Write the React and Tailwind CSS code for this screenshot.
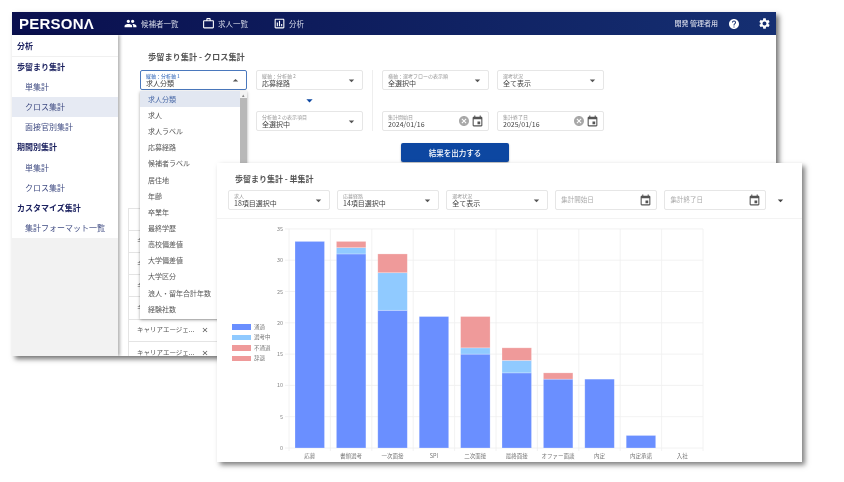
import { MdPeople, MdOutlineWorkOutline, MdOutlineAssessment, MdHelp, MdSettings, MdCancel, MdEvent, MdArrowDropDown, MdArrowDropUp, MdClose } from "react-icons/md";

const sidebar = [
  { label: "分析", head: true, line: true },
  { label: "歩留まり集計", head: true },
  { label: "単集計" },
  { label: "クロス集計", active: true },
  { label: "面接官別集計" },
  { label: "期間別集計", head: true },
  { label: "単集計" },
  { label: "クロス集計" },
  { label: "カスタマイズ集計", head: true },
  { label: "集計フォーマット一覧" },
];

const options = ["求人分類", "求人", "求人ラベル", "応募経路", "候補者ラベル", "居住地", "年齢", "卒業年", "最終学歴", "高校偏差値", "大学偏差値", "大学区分", "浪人・留年合計年数", "経験社数"];

const stages = [
  { name: "応募", pass: 33, mid: 0, fail: 0 },
  { name: "書類選考", pass: 31, mid: 1, fail: 1 },
  { name: "一次面接", pass: 22, mid: 6, fail: 3 },
  { name: "SPI", pass: 21, mid: 0, fail: 0 },
  { name: "二次面接", pass: 15, mid: 1, fail: 5 },
  { name: "最終面接", pass: 12, mid: 2, fail: 2 },
  { name: "オファー面談", pass: 11, mid: 0, fail: 1 },
  { name: "内定", pass: 11, mid: 0, fail: 0 },
  { name: "内定承諾", pass: 2, mid: 0, fail: 0 },
  { name: "入社", pass: 0, mid: 0, fail: 0 },
];

const legend = [
  { label: "通過", color: "bg-[#6a8fff]" },
  { label: "選考中", color: "bg-[#90caff]" },
  { label: "不通過", color: "bg-[#ef9a9a]" },
  { label: "辞退", color: "bg-[#ef9a9a]" },
];

function Field({ label, value, width = "w-[107px]", focused, date, clear }) {
  return (
    <div className={`${width} h-[20px] shrink-0 rounded-[2px] bg-white flex items-center pl-[5px] pr-[4px] ${focused ? "border-[1.5px] border-[#4a78bd]" : "border border-[#e6e6e6]"}`}>
      <div className="flex-1 min-w-0">
        <div className={`text-[5px] leading-[6px] whitespace-nowrap ${focused ? "text-[#2a62b8]" : "text-[#999999]"}`}>{label}</div>
        <div className="text-[7px] leading-[8px] text-[#444444] whitespace-nowrap">{value}</div>
      </div>
      {clear && <MdCancel className="text-[12px] text-[#a8a8a8] mr-[1px]" />}
      {date ? <MdEvent className="text-[13px] text-[#555555]" /> : focused ? <MdArrowDropUp className="text-[13px] text-[#555555]" /> : <MdArrowDropDown className="text-[13px] text-[#555555]" />}
    </div>
  );
}

function DateEmpty({ label }) {
  return (
    <div className="w-[102px] h-[20px] shrink-0 rounded-[2px] border border-[#e6e6e6] bg-white flex items-center justify-between pl-[5px] pr-[4px]">
      <span className="text-[6.5px] text-[#aaaaaa]">{label}</span>
      <MdEvent className="text-[13px] text-[#555555]" />
    </div>
  );
}

function Chart() {
  const x0 = 24;
  const step = 41.4;
  const unit = 6.26;
  const base = 229;
  const bar = (i, from, count, fill) =>
    count > 0 && <rect key={fill} x={x0 + step * i + 6} y={base - (from + count) * unit} width={29.5} height={count * unit} fill={fill} stroke="#ffffff" strokeOpacity="0.35" strokeWidth="0.7" />;
  return (
    <svg width="450" height="244" className="block shrink-0">
      {[0, 5, 10, 15, 20, 25, 30, 35].map(v => (
        <g key={v}>
          <line x1={x0 - 4} x2={x0 + step * 10} y1={base - v * unit} y2={base - v * unit} stroke="#efefef" strokeWidth="0.8" />
          <text x={x0 - 6} y={base - v * unit + 2} textAnchor="end" fontSize="5.5" fill="#888888">{v}</text>
        </g>
      ))}
      {stages.map((s, i) => (
        <g key={s.name}>
          <line x1={x0 + step * i} x2={x0 + step * i} y1={base - 219} y2={base + 3} stroke="#efefef" strokeWidth="0.8" />
          {bar(i, 0, s.pass, "#6a8fff")}
          {bar(i, s.pass, s.mid, "#90caff")}
          {bar(i, s.pass + s.mid, s.fail, "#ef9a9a")}
          <text x={x0 + step * i + 20.7} y={base + 10} textAnchor="middle" fontSize="5.5" fill="#777777">{s.name}</text>
        </g>
      ))}
      <line x1={x0 + step * 10} x2={x0 + step * 10} y1={base - 219} y2={base + 3} stroke="#efefef" strokeWidth="0.8" />
    </svg>
  );
}

export default function App() {
  return (
    <div className="relative w-[844px] h-[482px] overflow-hidden bg-white blur-[0.5px] font-['Noto_Sans_CJK_JP','Noto_Sans',sans-serif]">
      {/* back window */}
      <div className="absolute left-[12px] top-[12px] w-[764px] h-[344px] bg-white overflow-hidden flex flex-col shadow-[3px_3px_5px_rgba(0,0,0,0.55)]">
        <header className="h-[23px] shrink-0 flex items-center bg-gradient-to-r from-[#0a0f4e] to-[#152f72] text-white">
          <div className="ml-[7px] w-[105px] font-['Liberation_Sans'] font-bold text-[15px] tracking-[0.25px] leading-none">PERSONΛ</div>
          <nav className="flex items-center text-[7.5px] text-[#d5d9e8]">
            <MdPeople className="text-[13px] text-white" />
            <span className="ml-[4px] w-[61px]">候補者一覧</span>
            <MdOutlineWorkOutline className="text-[13px] text-white" />
            <span className="ml-[3px] w-[55px]">求人一覧</span>
            <MdOutlineAssessment className="text-[13px] text-white" />
            <span className="ml-[3px]">分析</span>
          </nav>
          <div className="ml-auto flex items-center pr-[5px]">
            <span className="text-[7px] font-medium text-[#d5d9e8]">開発 管理者用</span>
            <MdHelp className="ml-[10px] text-[12px]" />
            <MdSettings className="ml-[18px] text-[13px]" />
          </div>
        </header>
        <div className="flex-1 flex min-h-0">
          <aside className="w-[106px] shrink-0 bg-[#f2f2f2] shadow-[2px_0_3px_rgba(0,0,0,0.3)] relative">
            <div className="bg-white">
              {sidebar.map((s, i) => (
                <div key={i} className={`flex items-center text-[8px] leading-none ${s.head ? "pl-[5px] font-bold text-[#1c2260]" : "pl-[13px] text-[#3f4b82]"} ${s.active ? "bg-[#e6eaf3]" : ""} ${s.line ? "h-[22px] pt-[1px] border-b border-[#f0f0f0]" : "h-[20.1px]"}`}>
                  {s.label}
                </div>
              ))}
            </div>
          </aside>
          <main className="relative flex-1 min-w-0">
            <h2 className="ml-[30px] mt-[15px] text-[8.2px] leading-[13px] font-bold text-[#555555]">歩留まり集計 - クロス集計</h2>
            <div className="ml-[22px] mt-[7px] flex">
              <Field label="縦軸：分析軸 1" value="求人分類" focused />
              <div className="ml-[9px] w-[107px] flex flex-col items-center">
                <Field label="縦軸：分析軸 2" value="応募経路" />
                <MdArrowDropDown className="text-[15px] text-[#0d47a1] my-[3px]" />
                <Field label="分析軸 2 の表示項目" value="全選択中" />
              </div>
              <div className="ml-[9px] pl-[9px] border-l border-[#eeeeee] flex flex-col gap-[21px]">
                <div className="flex gap-[8px]">
                  <Field label="横軸：選考フローの表示順" value="全選択中" />
                  <Field label="選考状況" value="全て表示" />
                </div>
                <div className="flex gap-[8px]">
                  <Field label="集計開始日" value="2024/01/16" date clear />
                  <Field label="集計終了日" value="2025/01/16" date clear />
                </div>
              </div>
            </div>
            <button className="block ml-[283px] mt-[12px] w-[108px] h-[18.5px] rounded-[2px] bg-[#0d47a1] text-white text-[7.5px] font-medium shadow-[0_1px_2px_rgba(0,0,0,0.3)]">結果を出力する</button>
            <div className="ml-[10px] mt-[46px] w-[300px] border-t border-l border-[#e4e4e4]">
              <div className="h-[22px] border-b border-[#e4e4e4]" />
              {[0, 1, 2, 3].map(i => (
                <div key={i} className="h-[22.3px] border-b border-[#e4e4e4] flex items-center pl-[8px] text-[6.5px] text-[#555555]">キ</div>
              ))}
              {[4, 5].map(i => (
                <div key={i} className="h-[22.3px] border-b border-[#e4e4e4] flex items-center pl-[8px] w-[89px] text-[6.5px] text-[#555555]">
                  <span className="w-[61px] whitespace-nowrap overflow-hidden">キャリアエージェ...</span>
                  <MdClose className="text-[8px] text-[#555555] ml-[3px]" />
                </div>
              ))}
            </div>
            {/* open select menu */}
            <div className="absolute left-[22px] top-[56px] w-[107px] h-[228px] bg-white flex shadow-[0_1px_3px_rgba(0,0,0,0.35)]">
              <ul className="flex-1 text-[7px] text-[#555555]">
                {options.map((o, i) => (
                  <li key={o} className={`h-[16.15px] pl-[8px] flex items-center whitespace-nowrap ${i === 0 ? "bg-[#e2e7f1] text-[#4a6aa8]" : ""}`}>{o}</li>
                ))}
              </ul>
              <div className="w-[7px] bg-[#f3f3f3] flex flex-col">
                <div className="h-[7px] text-[5px] leading-[7px] text-center text-[#888888]">▴</div>
                <div className="h-[80px] bg-[#b8b8b8]" />
              </div>
            </div>
          </main>
        </div>
      </div>

      {/* front window */}
      <div className="absolute left-[217px] top-[163px] w-[585px] h-[299px] bg-white flex flex-col shadow-[3px_3px_5px_rgba(0,0,0,0.5)]">
        <h2 className="ml-[18px] mt-[9px] text-[8px] leading-[13px] font-bold text-[#555555]">歩留まり集計 - 単集計</h2>
        <div className="ml-[11px] mt-[5px] flex items-center gap-[7.1px]">
          <Field width="w-[102px]" label="求人" value="18項目選択中" />
          <Field width="w-[102px]" label="応募経路" value="14項目選択中" />
          <Field width="w-[102px]" label="選考状況" value="全て表示" />
          <DateEmpty label="集計開始日" />
          <DateEmpty label="集計終了日" />
          <MdArrowDropDown className="text-[13px] text-[#444444] ml-[1px]" />
        </div>
        <div className="mt-[8px] border-t border-[#f3f3f3] flex-1 flex items-center min-h-0">
          <div className="ml-[15px] w-[33px] shrink-0 flex flex-col gap-[5px] mt-[4px]">
            {legend.map(l => (
              <div key={l.label} className="flex items-center h-[5.5px]">
                <span className={`w-[19px] h-[5.5px] shrink-0 ${l.color}`} />
                <span className="ml-[3px] text-[5.5px] whitespace-nowrap text-[#777777]">{l.label}</span>
              </div>
            ))}
          </div>
          <Chart />
        </div>
      </div>
    </div>
  );
}
